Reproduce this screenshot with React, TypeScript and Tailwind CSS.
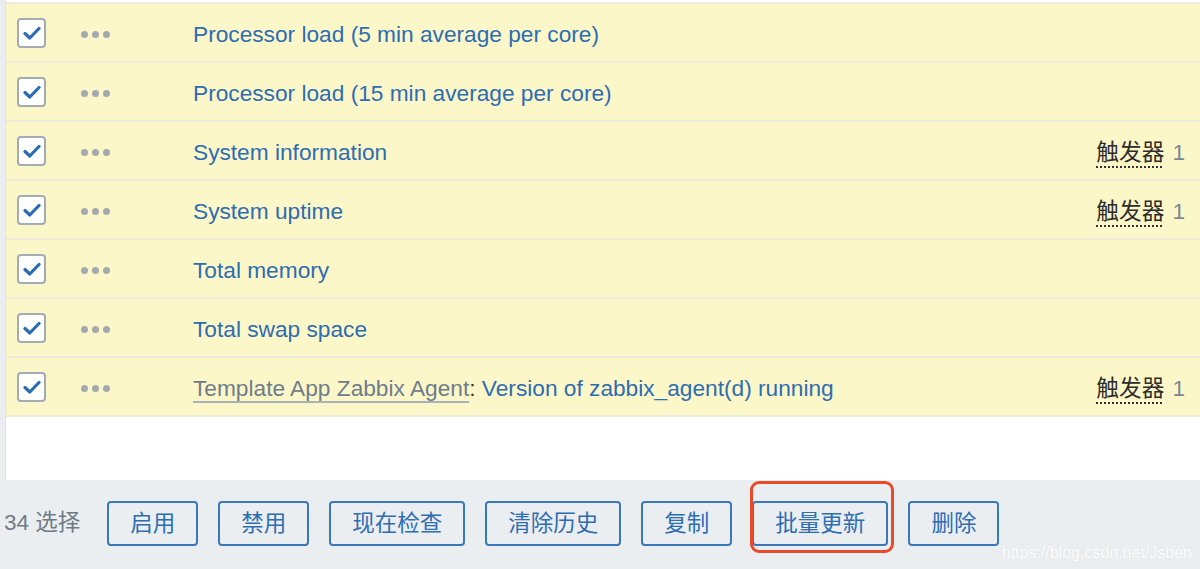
import { Fragment } from 'react';

type Item = {
  name: string;
  template?: string;
  triggers?: number;
};

const ITEMS: Item[] = [
  { name: 'Processor load (5 min average per core)' },
  { name: 'Processor load (15 min average per core)' },
  { name: 'System information', triggers: 1 },
  { name: 'System uptime', triggers: 1 },
  { name: 'Total memory' },
  { name: 'Total swap space' },
  { name: 'Version of zabbix_agent(d) running', template: 'Template App Zabbix Agent', triggers: 1 },
];

const ACTIONS = ['启用', '禁用', '现在检查', '清除历史', '复制', '批量更新', '删除'];

// Checked checkbox
const CheckBox = () => (
  <span className="flex h-[30px] w-[29px] items-center justify-center rounded-[4px] border-2 border-[#a3abb3] bg-white">
    <svg width="18" height="14" viewBox="0 0 18 14" fill="none">
      <path d="M2 7.5 L6.8 12 L16 2.5" stroke="#2a6db4" strokeWidth="3.2" strokeLinecap="round" strokeLinejoin="round" />
    </svg>
  </span>
);

// Three-dot menu icon
const Dots = () => (
  <span className="flex items-center gap-[4px] pt-[3px]">
    <span className="h-[7px] w-[7px] rounded-full bg-[#a3a9af]" />
    <span className="h-[7px] w-[7px] rounded-full bg-[#a3a9af]" />
    <span className="h-[7px] w-[7px] rounded-full bg-[#a3a9af]" />
  </span>
);

const Row = ({ item }: { item: Item }) => (
  <div className="flex h-[59px] items-center border-t-2 border-[#efebdb] bg-[#fcf7c8] pr-[15px]">
    <div className="ml-[11px] w-[64px]">
      <CheckBox />
    </div>
    <div className="w-[112px]">
      <Dots />
    </div>
    <div className="flex-1 whitespace-nowrap pt-[4px] leading-normal">
      {item.template && (
        <Fragment>
          <span className="text-[#6e7d8c] underline decoration-[#a9b1b9] decoration-[1.5px] underline-offset-[5px]">
            {item.template}
          </span>
          <span className="text-[#333]">:</span>{' '}
        </Fragment>
      )}
      <span className="text-[#2d6db2]">{item.name}</span>
    </div>
    {item.triggers && (
      <div className="flex items-center gap-[8px] pt-[4px] leading-normal">
        <span className="text-[#2c2c2c] underline decoration-dotted decoration-2 decoration-[#333] underline-offset-[6px]">
          触发器
        </span>
        <span className="text-[#7a8894]">{item.triggers}</span>
      </div>
    )}
  </div>
);

export default function App() {
  return (
    <div
      className="relative h-[569px] w-[1200px] overflow-hidden bg-[#ebeef0] text-[22.7px] leading-none"
      style={{ fontFamily: '"Liberation Sans", "Noto Sans CJK SC", sans-serif' }}
    >
      {/* List panel */}
      <div className="ml-[5px] h-[480px] border-l border-[#dfe3e6] bg-white pt-[2px]">
        {ITEMS.map((item, i) => (
          <Row key={i} item={item} />
        ))}
        <div className="border-t-2 border-[#efebdb]" />
      </div>

      {/* Action bar */}
      <div className="flex items-center pl-[4px] pt-[21px] text-[22.5px]">
        <span className="mr-[27px] text-[#717b85]">34 选择</span>
        <div className="flex gap-[20px]">
          {ACTIONS.map((label) => (
            <div key={label} className="relative">
              <button className="h-[45px] rounded-[4px] border-2 border-[#3a78bc] px-[21px] pt-[2px] text-[#2d6db2]">
                {label}
              </button>
              {label === '批量更新' && (
                <span className="pointer-events-none absolute -bottom-[7px] -left-[2px] -right-[6px] -top-[20px] rounded-[9px] border-[3px] border-[#ea4a2a]" />
              )}
            </div>
          ))}
        </div>
      </div>

      {/* Watermark */}
      <span className="absolute bottom-[8px] right-[8px] text-[16px] text-white [text-shadow:0_0_1px_#cdd2d6]">
        https://blog.csdn.net/Jsben
      </span>
    </div>
  );
}
